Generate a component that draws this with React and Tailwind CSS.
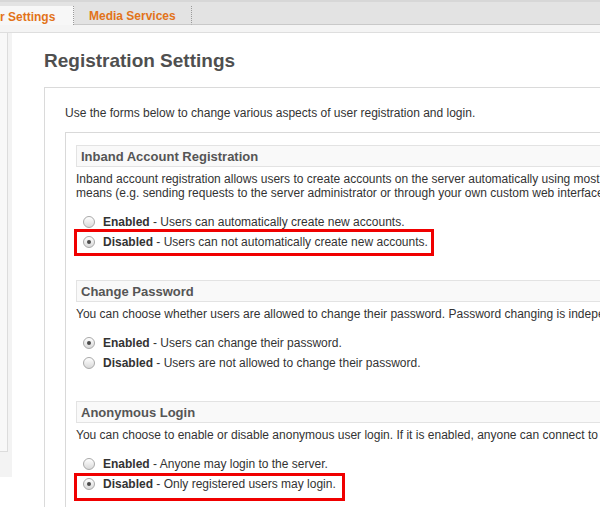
import React from 'react';

// --- Small pieces ---
const Radio = ({ checked }) => (
  <span className="flex h-[12px] w-[12px] shrink-0 items-center justify-center rounded-full border border-[#a9a9a9] bg-linear-to-b from-white to-[#d9d9d9]">
    {checked && <span className="h-[4px] w-[4px] rounded-full bg-[#4a4a4a]" />}
  </span>
);

const Option = ({ checked, label, text, mark }) => (
  <div className="relative flex h-[20px] items-center">
    <span className="ml-[7px] mr-[8px]">
      <Radio checked={checked} />
    </span>
    <span className="whitespace-nowrap">
      <b className="font-bold">{label}</b> - {text}
    </span>
    {mark && <span className={`pointer-events-none absolute border-[3px] border-[#f00000] ${mark}`} />}
  </div>
);

const Section = ({ title, lines, options, first }) => (
  <div className={first ? '' : 'mt-[28px]'}>
    <div className="h-[22px] border border-[#e3e3e3] bg-[#f9f9f9] pl-[4px] pt-[1px] text-[13px] font-bold leading-[19px] text-[#555]">
      {title}
    </div>
    <div className="mt-[5px] leading-[14px]">
      {lines.map((l, i) => (
        <div key={i} className="whitespace-nowrap">{l}</div>
      ))}
    </div>
    <div className="mt-[12px]">
      {options.map((o, i) => (
        <Option key={i} {...o} />
      ))}
    </div>
  </div>
);

// --- Data ---
const sections = [
  {
    title: 'Inband Account Registration',
    lines: [
      'Inband account registration allows users to create accounts on the server automatically using most clients. It does not affect the ability to create new accounts through this web administration interface.',
      'means (e.g. sending requests to the server administrator or through your own custom web interface).',
    ],
    options: [
      { label: 'Enabled', text: 'Users can automatically create new accounts.' },
      {
        checked: true,
        label: 'Disabled',
        text: 'Users can not automatically create new accounts.',
        mark: 'left-[-2px] top-[-3px] h-[27px] w-[360px]',
      },
    ],
  },
  {
    title: 'Change Password',
    lines: [
      'You can choose whether users are allowed to change their password. Password changing is independent from your authentication mechanism.',
    ],
    options: [
      { checked: true, label: 'Enabled', text: 'Users can change their password.' },
      { label: 'Disabled', text: 'Users are not allowed to change their password.' },
    ],
  },
  {
    title: 'Anonymous Login',
    lines: [
      'You can choose to enable or disable anonymous user login. If it is enabled, anyone can connect to the server and create a new session.',
    ],
    options: [
      { label: 'Enabled', text: 'Anyone may login to the server.' },
      {
        checked: true,
        label: 'Disabled',
        text: 'Only registered users may login.',
        mark: 'left-[-2px] top-[-1px] h-[28px] w-[271px]',
      },
    ],
  },
];

export default function App() {
  return (
    <div className="h-[507px] w-[600px] overflow-hidden bg-white font-['Liberation_Sans',Arial,sans-serif] text-[12px] text-[#333]">
      {/* Tab bar */}
      <div className="flex h-[25px] w-[1200px] items-end border-t-[2px] border-[#d7d7d7] bg-[#e3e3e3] text-[12px] font-bold text-[#e2731a]">
        <div className="flex h-[19px] w-[74px] items-center border-r border-dotted border-[#9a9a9a] bg-[#f7f7f7] pt-[2px]">
          r Settings
        </div>
        <div className="flex h-[19px] items-center border-b border-r border-[#c9c9c9] border-r-[#9a9a9a] border-dotted px-[15px] pt-[1px] [border-bottom-style:solid]">
          Media Services
        </div>
        <div className="h-[19px] flex-1 border-b border-[#c9c9c9]" />
      </div>
      <div className="h-[8px] w-[1200px] border-b border-[#dedede] bg-[#f4f4f4]" />

      {/* Body */}
      <div className="flex w-[1200px]">
        <div className="h-[444px] w-[12px] shrink-0 bg-[#f3f3f3]">
          <div className="h-[419px] w-[8px] border-b border-r border-[#dcdcdc] bg-[#f8f8f8]" />
        </div>

        <div className="flex-1 pl-[32px] pt-[16px]">
          <h1 className="text-[19px] font-bold leading-[23px] text-[#4f4f4f]">Registration Settings</h1>

          <div className="mt-[15px] border border-[#dadada] pl-[20px] pt-[18px]">
            <p className="leading-[14px]">
              Use the forms below to change various aspects of user registration and login.
            </p>

            <div className="mt-[12px] border border-[#d9d9d9] pb-[40px] pl-[10px] pt-[12px]">
              {sections.map((s, i) => (
                <Section key={s.title} first={i === 0} {...s} />
              ))}
            </div>
          </div>
        </div>
      </div>
    </div>
  );
}
